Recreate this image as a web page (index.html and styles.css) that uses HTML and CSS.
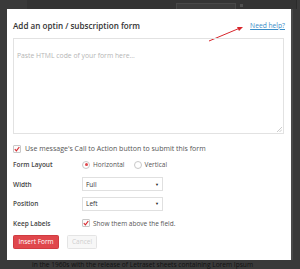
FILE: index.html
```html
<!DOCTYPE html>
<html lang="en">
<head>
    <meta charset="UTF-8">
    <meta name="viewport" content="width=device-width, initial-scale=1.0">
    <title>Add an optin form</title>
    <link rel="stylesheet" href="styles.css">
</head>
<body>
    <div class="page">
        <div class="page-top">
            <span class="ghost-field"></span>
            <span class="ghost-close"></span>
        </div>

        <div class="modal">
            <div class="modal-head">
                <h2>Add an optin / subscription form</h2>
                <a href="#" class="help-link">Need help?</a>
            </div>

            <svg class="help-arrow" width="40" height="20" viewBox="0 0 40 20">
                <line x1="2" y1="17" x2="33" y2="4" stroke="#d8262c" stroke-width="1"/>
                <polygon points="36,3 30,3 32,7" fill="#d8262c"/>
            </svg>

            <div class="code-box">
                <span class="placeholder">Paste HTML code of your form here...</span>
                <svg class="resize" width="5" height="5" viewBox="0 0 5 5">
                    <line x1="0" y1="5" x2="5" y2="0" stroke="#aaa" stroke-width="0.6"/>
                    <line x1="2.5" y1="5" x2="5" y2="2.5" stroke="#aaa" stroke-width="0.6"/>
                </svg>
            </div>

            <div class="cta-row">
                <span class="check">
                    <svg width="6" height="6" viewBox="0 0 6 6"><path d="M0.8 3.2 L2.4 4.8 L5.3 1" fill="none" stroke="#d8262c" stroke-width="1.1"/></svg>
                </span>
                <span>Use message's Call to Action button to submit this form</span>
            </div>

            <div class="field-row">
                <span class="field-label">Form Layout</span>
                <span class="radio on"></span>
                <span class="radio-text">Horizontal</span>
                <span class="radio"></span>
                <span class="radio-text">Vertical</span>
            </div>

            <div class="field-row">
                <span class="field-label">Width</span>
                <div class="select"><span>Full</span><span class="caret">▼</span></div>
            </div>

            <div class="field-row">
                <span class="field-label">Position</span>
                <div class="select"><span>Left</span><span class="caret">▼</span></div>
            </div>

            <div class="field-row">
                <span class="field-label">Keep Labels</span>
                <span class="check">
                    <svg width="6" height="6" viewBox="0 0 6 6"><path d="M0.8 3.2 L2.4 4.8 L5.3 1" fill="none" stroke="#d8262c" stroke-width="1.1"/></svg>
                </span>
                <span class="radio-text">Show them above the field.</span>
            </div>

            <div class="actions">
                <button class="btn-insert">Insert Form</button>
                <button class="btn-cancel" disabled>Cancel</button>
            </div>
        </div>

        <p class="page-text">in the 1960s with the release of Letraset sheets containing Lorem Ipsum</p>
    </div>
</body>
</html>
```

FILE: styles.css
```css
body {
    margin: 0;
    background: #3a3a3a;
    font-family: 'Open Sans', 'Liberation Sans', sans-serif;
    overflow: hidden;
}

.page {
    position: relative;
    width: 300px;
    height: 269px;
    padding: 9px 0 0 7px;
    box-sizing: border-box;
}

.page-top {
    position: absolute;
    top: 0;
    left: 27px;
    width: 269px;
    height: 9px;
    background: #343434;
    border-right: 1px solid #2b2b2b;
}

.ghost-field {
    position: absolute;
    left: 149px;
    top: 3px;
    width: 58px;
    height: 5px;
    border: 1px solid #484848;
    background: #3c3c3c;
}

.ghost-close {
    position: absolute;
    left: 213px;
    top: 4px;
    width: 3px;
    height: 3px;
    background: #505050;
}

.modal {
    position: relative;
    width: 284px;
    height: 251px;
    padding: 10px 7px 0 6px;
    box-sizing: border-box;
    background: #fff;
    box-shadow: 2px 0 0 #4a4a4a;
    color: #444;
}

.modal-head {
    display: flex;
    justify-content: space-between;
    align-items: center;
    height: 12px;
}

.modal-head h2 {
    margin: 0;
    font-size: 8.1px;
    font-weight: 600;
    color: #333;
}

.help-link {
    font-size: 6.7px;
    color: #3a8dc8;
    text-decoration: underline;
    margin-right: -1px;
}

.help-arrow {
    position: absolute;
    left: 200px;
    top: 15px;
}

.code-box {
    position: relative;
    margin-top: 7px;
    height: 96px;
    border: 1px solid #e2e2e2;
    box-sizing: border-box;
    padding: 1.5px 3px;
}

.placeholder {
    font-size: 6.8px;
    color: #b5b5b5;
}

.resize {
    position: absolute;
    right: 1px;
    bottom: 1px;
}

.cta-row {
    display: flex;
    align-items: center;
    gap: 4px;
    margin-top: 10px;
    height: 9px;
    font-size: 7px;
    color: #555;
}

.check {
    display: flex;
    align-items: center;
    justify-content: center;
    width: 8px;
    height: 8px;
    border: 1px solid #c8c8c8;
    box-sizing: border-box;
    border-radius: 1px;
    background: #fbfbfb;
}

.field-row {
    display: flex;
    align-items: center;
    height: 14px;
    margin-top: 5.5px;
    font-size: 6.5px;
    color: #555;
}

.cta-row + .field-row {
    margin-top: 4.5px;
}

.field-label {
    width: 69px;
    font-weight: 600;
    color: #444;
}

.radio {
    position: relative;
    width: 8px;
    height: 8px;
    border: 1px solid #c8c8c8;
    border-radius: 50%;
    box-sizing: border-box;
}

.radio.on::after {
    content: '';
    position: absolute;
    left: 1.5px;
    top: 1.5px;
    width: 3px;
    height: 3px;
    border-radius: 50%;
    background: #e0474c;
}

.radio-text {
    margin-left: 3px;
    margin-right: 9px;
}

.select {
    display: flex;
    justify-content: space-between;
    align-items: center;
    width: 81px;
    height: 14px;
    border: 1px solid #e0e0e0;
    box-sizing: border-box;
    padding: 0 3px;
    color: #333;
}

.caret {
    font-size: 4px;
    color: #222;
}

.actions {
    display: flex;
    gap: 8px;
    margin-top: 4.5px;
}

.actions button {
    height: 14px;
    padding: 0;
    font-family: inherit;
    font-size: 6.5px;
    border-radius: 1.5px;
}

.btn-insert {
    width: 46px;
    background: #e0474c;
    border: 1px solid #cf3b40;
    color: #fff;
}

.btn-cancel {
    width: 30px;
    background: #f7f7f7;
    border: 1px solid #e4e4e4;
    color: #cfcfcf;
}

.page-text {
    margin: 0 0 0 25px;
    font-size: 6.6px;
    line-height: 9px;
    color: #111;
}
```
